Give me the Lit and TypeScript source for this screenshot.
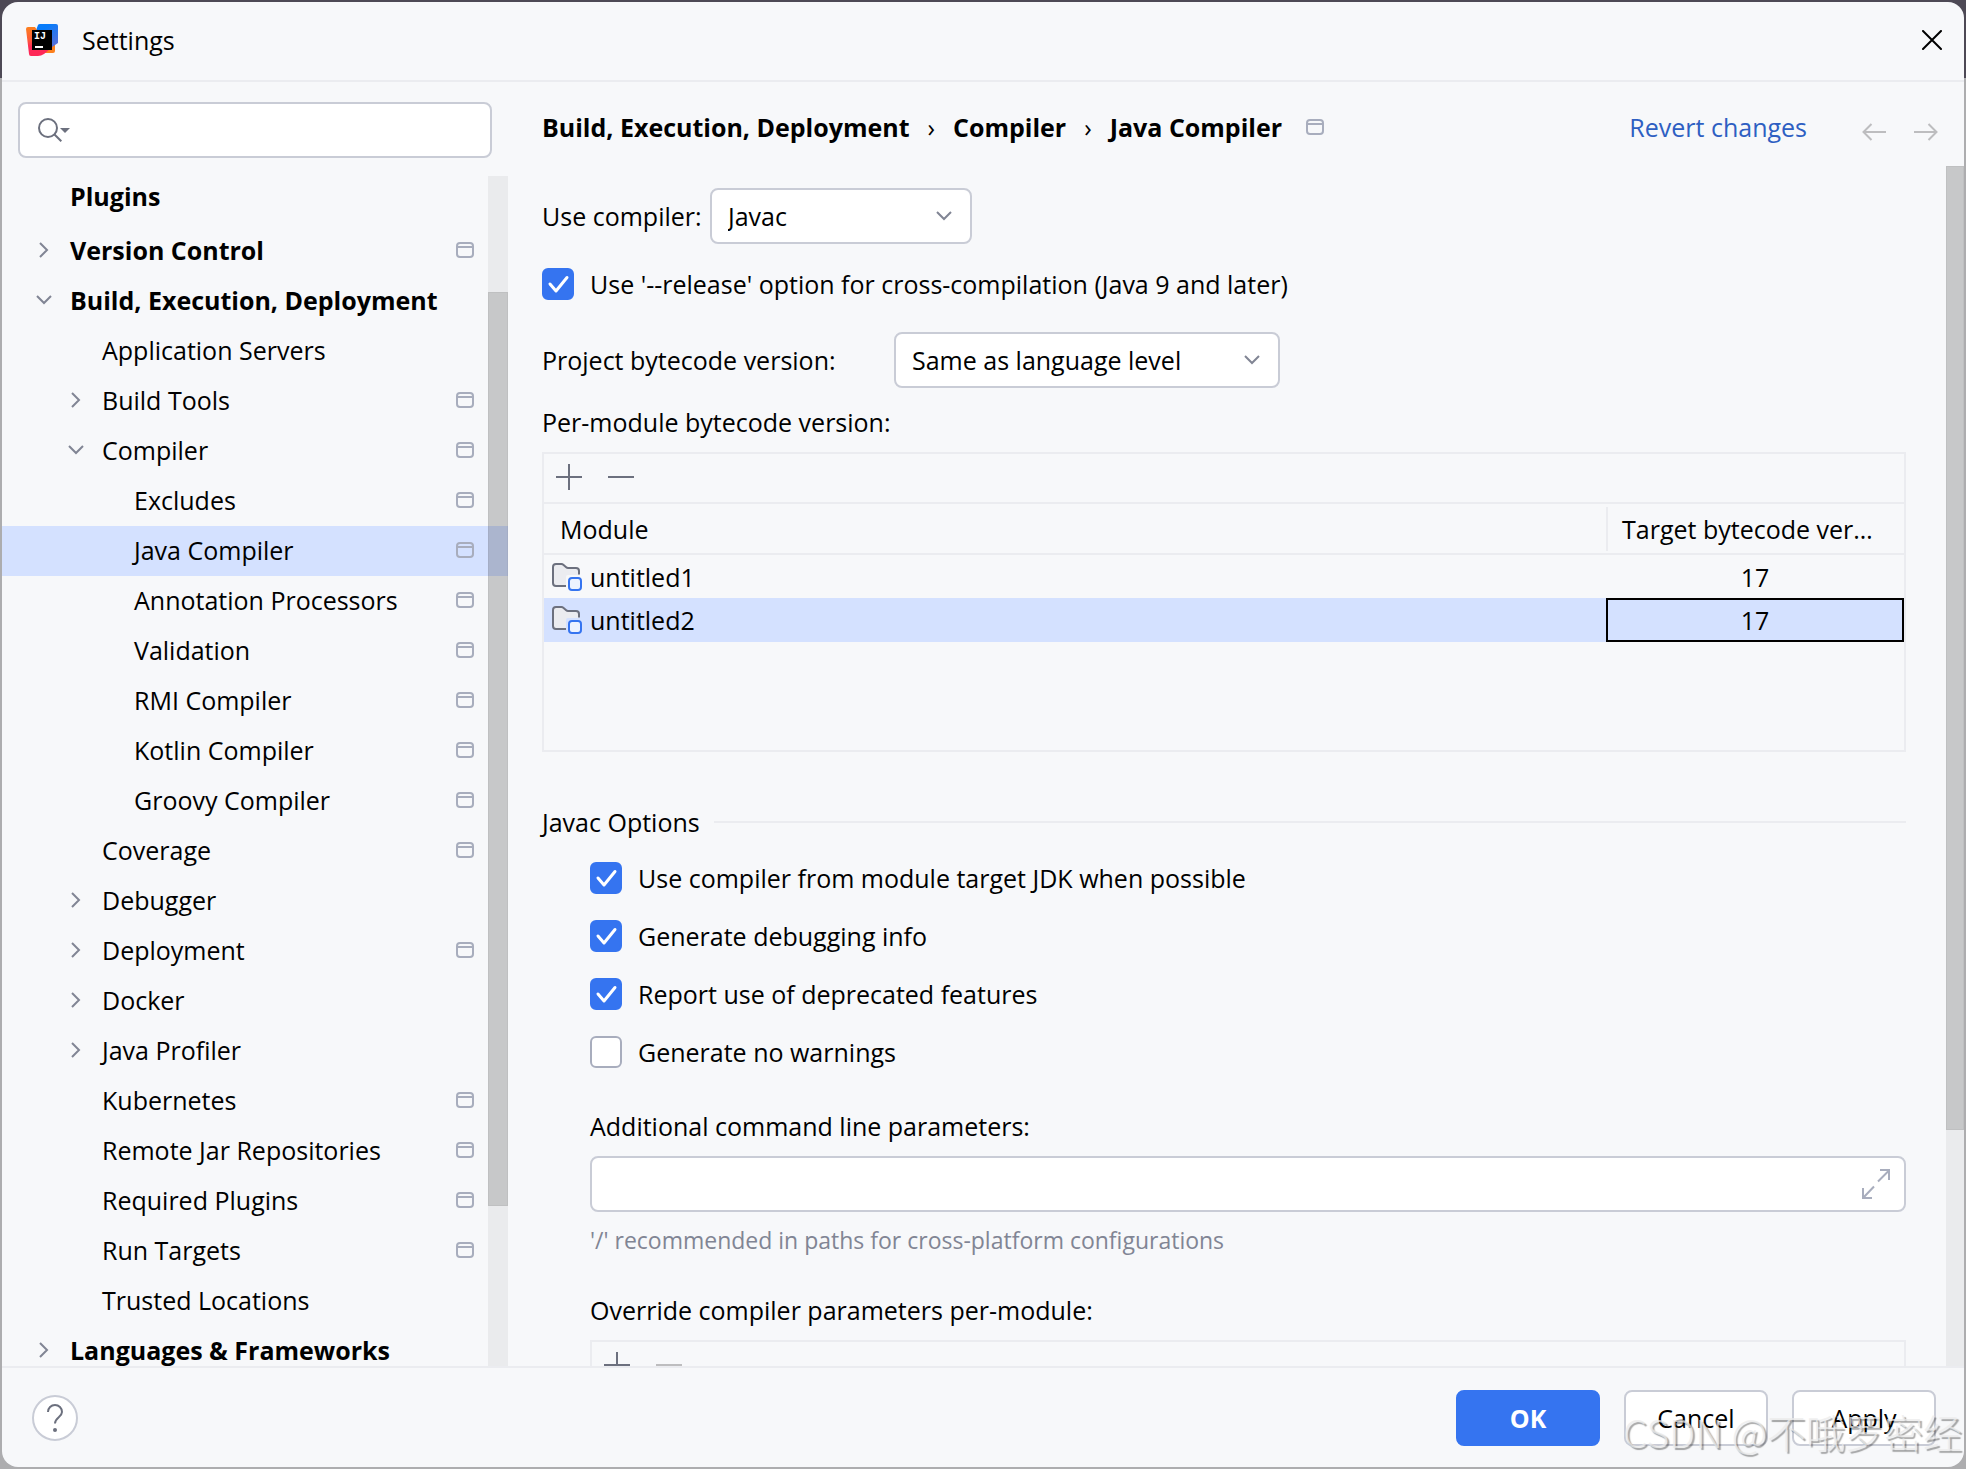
import { LitElement, html, css, svg, nothing } from "lit";
import { customElement, state } from "lit/decorators.js";
import { classMap } from "lit/directives/class-map.js";

interface TreeNode {
  label: string;
  depth: 0 | 1 | 2;
  arrow?: "open" | "closed";
  project?: boolean;
}

const TREE: TreeNode[] = [
  { label: "Plugins", depth: 0 },
  { label: "Version Control", depth: 0, arrow: "closed", project: true },
  { label: "Build, Execution, Deployment", depth: 0, arrow: "open" },
  { label: "Application Servers", depth: 1 },
  { label: "Build Tools", depth: 1, arrow: "closed", project: true },
  { label: "Compiler", depth: 1, arrow: "open", project: true },
  { label: "Excludes", depth: 2, project: true },
  { label: "Java Compiler", depth: 2, project: true },
  { label: "Annotation Processors", depth: 2, project: true },
  { label: "Validation", depth: 2, project: true },
  { label: "RMI Compiler", depth: 2, project: true },
  { label: "Kotlin Compiler", depth: 2, project: true },
  { label: "Groovy Compiler", depth: 2, project: true },
  { label: "Coverage", depth: 1, project: true },
  { label: "Debugger", depth: 1, arrow: "closed" },
  { label: "Deployment", depth: 1, arrow: "closed", project: true },
  { label: "Docker", depth: 1, arrow: "closed" },
  { label: "Java Profiler", depth: 1, arrow: "closed" },
  { label: "Kubernetes", depth: 1, project: true },
  { label: "Remote Jar Repositories", depth: 1, project: true },
  { label: "Required Plugins", depth: 1, project: true },
  { label: "Run Targets", depth: 1, project: true },
  { label: "Trusted Locations", depth: 1 },
  { label: "Languages & Frameworks", depth: 0, arrow: "closed" },
];

const MODULES = [
  { name: "untitled1", target: "17" },
  { name: "untitled2", target: "17" },
];

const JAVAC_OPTIONS = [
  { id: "module-jdk", label: "Use compiler from module target JDK when possible", checked: true },
  { id: "debug-info", label: "Generate debugging info", checked: true },
  { id: "deprecated", label: "Report use of deprecated features", checked: true },
  { id: "no-warnings", label: "Generate no warnings", checked: false },
];

const icon = (width: number, height: number, body: unknown) => html`<svg
  class="icon" width=${width} height=${height} viewBox="0 0 ${width} ${height}"
  fill="none" aria-hidden="true">${body}</svg>`;

const projectIcon = () => icon(18, 16, svg`
  <rect x="1" y="1" width="16" height="14" rx="3" stroke="#A8ADBD" stroke-width="2"/>
  <path d="M1 5H17" stroke="#A8ADBD" stroke-width="2"/>`);
const chevronRight = () => icon(16, 16, svg`
  <path d="M4 1L11 8L4 15" stroke="#818594" stroke-width="2"/>`);
const chevronDown = () => icon(16, 16, svg`
  <path d="M1 4L8 11L15 4" stroke="#818594" stroke-width="2"/>`);
const plusIcon = () => icon(26, 26, svg`
  <path d="M0 13H26M13 0V26" stroke="#6C707E" stroke-width="2"/>`);
const minusIcon = (color: string) => icon(26, 26, svg`
  <path d="M0 13H26" stroke=${color} stroke-width="2"/>`);
const moduleIcon = () => icon(30, 28, svg`
  <path d="M14 23H4A3 3 0 0 1 1 20V4A3 3 0 0 1 4 1H10L15 5H24A3 3 0 0 1 27 8V12H16A2 2 0 0 0 14 14Z" fill="#EBECF0"/>
  <path d="M14 23H4A3 3 0 0 1 1 20V4A3 3 0 0 1 4 1H9.500Q10.500 1 11.300 1.700L14.200 4.300Q15 5 16 5H24A3 3 0 0 1 27 8V11.500" stroke="#6C707E" stroke-width="2"/>
  <rect x="17" y="15" width="12" height="12" rx="3" fill="#EDF3FF" stroke="#3574F0" stroke-width="2"/>`);
const searchIcon = () => icon(32, 24, svg`
  <circle cx="10" cy="10" r="9" stroke="#6C707E" stroke-width="2"/>
  <path d="M16.500 16.500L23.300 23.300" stroke="#6C707E" stroke-width="2"/>
  <path d="M22 10H32L27 15Z" fill="#6C707E"/>`);
const closeIcon = () => icon(20, 20, svg`
  <path d="M1 1L19 19M19 1L1 19" stroke="#000" stroke-width="2" stroke-linecap="round"/>`);
const arrowLeft = () => icon(24, 18, svg`
  <path d="M24 9H1.500M9.500 1L1.500 9L9.500 17" stroke="#BDBDBF" stroke-width="2"/>`);
const arrowRight = () => icon(24, 18, svg`
  <path d="M0 9H22.500M14.500 1L22.500 9L14.500 17" stroke="#BDBDBF" stroke-width="2"/>`);
const expandIcon = () => icon(28, 30, svg`
  <path d="M16 12.500L27 1.500M18 1H27V11M12 17.500L1 29M1 19V29H10" stroke="#A8ADBD" stroke-width="2"/>`);
const helpIcon = () => icon(16, 28, svg`
  <path d="M1 8A7 7 0 0 1 15 8C15 13 8 13.500 8 19.500" stroke="#6C707E" stroke-width="2"/>
  <circle cx="8" cy="26" r="2" fill="#6C707E"/>`);
const checkIcon = () => icon(32, 32, svg`
  <path d="M8 16L14 23L25 9.500" stroke="#FFF" stroke-width="3" stroke-linecap="round" stroke-linejoin="round"/>`);

const logo = () => icon(32, 32, svg`
  <defs>
    <linearGradient id="warm" x1="0" y1="0" x2="0" y2="1">
      <stop offset="0" stop-color="#FC801D"/><stop offset="0.450" stop-color="#FE5A3A"/>
      <stop offset="0.700" stop-color="#FE2857"/>
    </linearGradient>
    <linearGradient id="cool" x1="0" y1="0" x2="0.600" y2="1">
      <stop offset="0.300" stop-color="#087CFA"/><stop offset="1" stop-color="#5A6FD8"/>
    </linearGradient>
  </defs>
  <path d="M20 20H29V27Q29 29 27 29H16Z" fill="#FC801D"/>
  <path d="M12 1Q12.500 0 14 0H30Q32 0 32 2V19L20 27L9 9Z" fill="url(#cool)"/>
  <path d="M0 5Q0 3 2 3H9L11 6L24 25L18 30Q15 32 12 32H5Q3 32 3 30Z" fill="url(#warm)"/>
  <rect x="6" y="6" width="20" height="20" fill="#000"/>
  <text x="8" y="15" class="logo-text">IJ</text>
  <rect x="9" y="22" width="8" height="2" fill="#FFF"/>`);

@customElement("app-root")
export class AppRoot extends LitElement {
  static styles = css`
    :host {
      display: block;
      height: 100vh;
      box-sizing: border-box;
      padding: 2px;
      overflow: hidden;
      position: relative;
      background: linear-gradient(#4d4955 78px, #adadaf 78px);
      color: #000;
      font: 25px/32px "Open Sans", "Noto Sans", sans-serif;
    }
    * { box-sizing: border-box; }
    button, select, input { font: inherit; color: inherit; margin: 0; }
    button { background: none; border: 0; padding: 0; }
    .icon { display: block; flex: none; }
    .logo-text { font: bold 10px "Liberation Mono", monospace; fill: #fff; }

    .window {
      height: 100%;
      display: flex;
      flex-direction: column;
      background: #f7f8fa;
      border-radius: 16px;
      overflow: hidden;
    }
    .titlebar {
      flex: none;
      height: 80px;
      display: flex;
      align-items: center;
      gap: 24px;
      padding: 0 22px 2px 24px;
      border-bottom: 2px solid #ebecf0;
    }
    .title { flex: 1; margin: 0; font-size: inherit; font-weight: 400; }

    .main { flex: 1; min-height: 0; display: flex; }
    .sidebar { flex: none; width: 506px; display: flex; flex-direction: column; }
    .search {
      display: flex;
      align-items: center;
      gap: 8px;
      height: 56px;
      margin: 20px 16px 18px;
      padding: 0 18px;
      background: #fff;
      border: 2px solid #c9ccd6;
      border-radius: 8px;
    }
    .search input { flex: 1; min-width: 0; border: 0; outline: 0; background: none; }

    .scroll { flex: 1; min-height: 0; position: relative; overflow: hidden; }
    .track { position: absolute; inset: 0 0 0 auto; background: rgba(0, 0, 0, 0.05); }
    .thumb {
      position: absolute;
      inset-inline: 0;
      background: rgba(0, 0, 0, 0.15);
      border: 1px solid rgba(0, 0, 0, 0.04);
    }
    .tree .track { width: 20px; }
    .page .track { width: 18px; }

    .tree ul { list-style: none; margin: 0; padding: 0; }
    .node {
      display: flex;
      align-items: center;
      gap: 18px;
      width: 100%;
      height: 50px;
      padding-right: 34px;
      padding-bottom: 2px;
      text-align: left;
    }
    .node.first { padding-bottom: 10px; }
    .node.selected { background: #d4e1ff; }
    .node .name { flex: 1; white-space: nowrap; }
    .twisty { flex: none; width: 16px; }
    .depth-0 { padding-left: 34px; font-weight: 700; }
    .depth-1 { padding-left: 66px; }
    .depth-2 { padding-left: 98px; }

    .content { flex: 1; min-width: 0; display: flex; flex-direction: column; }
    .header {
      flex: none;
      height: 84px;
      display: flex;
      align-items: center;
      gap: 27px;
      padding: 6px 26px 0 34px;
    }
    .crumbs {
      flex: 1;
      display: flex;
      gap: 18px;
      margin: 0;
      padding: 0;
      list-style: none;
      font-weight: 700;
      white-space: nowrap;
      align-items: center;
    }
    .crumbs li { display: flex; gap: 18px; align-items: center; }
    .crumbs span { font-weight: 400; }
    .crumbs .icon { margin-left: 6px; }
    .revert { color: #2e5fc2; text-decoration: none; white-space: nowrap; }
    .history { display: flex; gap: 28px; padding: 10px 0 0 28px; }

    .form { display: flex; flex-direction: column; padding: 22px 58px 0 34px; }
    .row { display: flex; align-items: center; }
    .compiler label { width: 168px; }
    .release { margin: 24px 0 32px; }
    .bytecode label { width: 352px; }
    .select { display: grid; align-items: center; }
    .select > * { grid-area: 1 / 1; }
    .select .icon { justify-self: end; margin-right: 20px; pointer-events: none; }
    select {
      appearance: none;
      height: 56px;
      padding: 0 56px 0 16px;
      border: 2px solid #c9ccd6;
      border-radius: 8px;
      background: #fff;
    }
    .narrow select { width: 262px; }
    .wide select { width: 386px; }

    .check { display: flex; align-items: center; gap: 16px; }
    .box { display: grid; flex: none; }
    .box > * { grid-area: 1 / 1; }
    .box .icon { pointer-events: none; visibility: hidden; }
    .box input {
      appearance: none;
      width: 32px;
      height: 32px;
      border: 2px solid #a8adbd;
      border-radius: 6px;
      background: #fff;
    }
    .box input:checked { background: #3574f0; border-color: #3574f0; }
    .box input:checked + .icon { visibility: visible; }

    .caption { display: block; margin: 18px 0 14px; }
    .panel { height: 300px; border: 2px solid #ebecf0; }
    .tools {
      display: flex;
      align-items: center;
      gap: 26px;
      height: 50px;
      padding: 0 12px 2px;
      border-bottom: 2px solid #ebecf0;
    }
    table { width: 100%; border-collapse: collapse; table-layout: fixed; }
    th, td { padding: 0; font-weight: 400; text-align: left; }
    th { height: 50px; border-bottom: 2px solid #ebecf0; }
    .col-target { width: 298px; }
    .head { display: block; padding: 6px 16px; }
    .head.target {
      padding: 6px 24px 6px 14px;
      border-left: 2px solid #ebecf0;
      overflow: hidden;
      text-overflow: ellipsis;
      white-space: nowrap;
    }
    td { height: 44px; }
    .module { display: flex; align-items: center; gap: 8px; padding-left: 8px; }
    .value { text-align: center; }
    tr.selected { background: #d4e1ff; }
    tr.selected .value { outline: 2px solid #000; outline-offset: -2px; }

    fieldset { border: 0; margin: 54px 0 0; padding: 0; min-width: 0; }
    legend { display: flex; align-items: center; gap: 14px; width: 100%; padding: 0; }
    .rule { flex: 1; height: 2px; background: #ebecf0; }
    .options { display: flex; flex-direction: column; gap: 26px; padding: 24px 0 0 48px; }
    .params { padding: 24px 0 0 48px; }
    .field {
      display: flex;
      align-items: center;
      height: 56px;
      padding: 0 14px;
      background: #fff;
      border: 2px solid #c9ccd6;
      border-radius: 8px;
    }
    .field input { flex: 1; min-width: 0; border: 0; outline: 0; background: none; }
    .hint { margin: 12px 0 38px; color: #818594; font-size: 23px; }

    .footer {
      flex: none;
      height: 101px;
      display: flex;
      align-items: center;
      gap: 24px;
      padding: 0 28px 0 30px;
      border-top: 2px solid #ebecf0;
    }
    .help {
      display: grid;
      place-items: center;
      width: 46px;
      height: 46px;
      margin-right: auto;
      background: #fff;
      border: 2px solid #c9ccd6;
      border-radius: 50%;
    }
    .action {
      width: 144px;
      height: 56px;
      background: #fff;
      border: 2px solid #c9ccd6;
      border-radius: 8px;
    }
    .action.primary { background: #3574f0; border-color: #3574f0; color: #fff; font-weight: 700; }
    .watermark {
      position: absolute;
      right: 4px;
      bottom: 10px;
      font: 300 39px/56px "Noto Sans CJK SC", sans-serif;
      color: rgba(235, 235, 235, 0.75);
      text-shadow: 2px 2px 1px rgba(0, 0, 0, 0.35);
      white-space: nowrap;
      pointer-events: none;
    }
  `;

  @state() private selectedPage = "Java Compiler";
  @state() private selectedModule = "untitled2";

  private scrollbar(start: number, size: number) {
    return html`<div class="track">
      <div class="thumb" style="top:${start}%;height:${size}%"></div>
    </div>`;
  }

  private node(item: TreeNode, index: number) {
    const classes = {
      node: true,
      first: index === 0,
      selected: item.label === this.selectedPage,
      [`depth-${item.depth}`]: true,
    };
    const arrow = item.arrow === "open" ? chevronDown() : item.arrow === "closed" ? chevronRight() : nothing;
    return html`<li>
      <button class=${classMap(classes)} @click=${() => (this.selectedPage = item.label)}>
        <span class="twisty">${arrow}</span>
        <span class="name">${item.label}</span>
        ${item.project ? projectIcon() : nothing}
      </button>
    </li>`;
  }

  private checkbox(id: string, label: string, checked: boolean) {
    return html`<div class="check">
      <span class="box"><input type="checkbox" id=${id} ?checked=${checked} />${checkIcon()}</span>
      <label for=${id}>${label}</label>
    </div>`;
  }

  private modules() {
    return html`<table>
      <colgroup><col /><col class="col-target" /></colgroup>
      <thead>
        <tr>
          <th><span class="head">Module</span></th>
          <th><span class="head target">Target bytecode version</span></th>
        </tr>
      </thead>
      <tbody>
        ${MODULES.map((m) => html`<tr
          class=${classMap({ selected: m.name === this.selectedModule })}
          @click=${() => (this.selectedModule = m.name)}>
          <td><span class="module">${moduleIcon()}${m.name}</span></td>
          <td class="value">${m.target}</td>
        </tr>`)}
      </tbody>
    </table>`;
  }

  render() {
    return html`
      <div class="window">
        <header class="titlebar">
          ${logo()}
          <h1 class="title">Settings</h1>
          <button aria-label="Close">${closeIcon()}</button>
        </header>
        <div class="main">
          <nav class="sidebar" aria-label="Settings pages">
            <div class="search">${searchIcon()}<input type="text" aria-label="Search settings" /></div>
            <div class="scroll tree">
              <ul>${TREE.map((item, i) => this.node(item, i))}</ul>
              ${this.scrollbar(9.75, 76.8)}
            </div>
          </nav>
          <main class="content">
            <div class="header">
              <ol class="crumbs">
                <li>Build, Execution, Deployment <span>›</span></li>
                <li>Compiler <span>›</span></li>
                <li>Java Compiler ${projectIcon()}</li>
              </ol>
              <a class="revert" href="#">Revert changes</a>
              <div class="history">
                <button aria-label="Back" disabled>${arrowLeft()}</button>
                <button aria-label="Forward" disabled>${arrowRight()}</button>
              </div>
            </div>
            <div class="scroll page">
              <div class="form">
                <div class="row compiler">
                  <label for="compiler">Use compiler:</label>
                  <span class="select narrow">
                    <select id="compiler"><option>Javac</option><option>Eclipse</option></select>
                    ${chevronDown()}
                  </span>
                </div>
                <div class="release">
                  ${this.checkbox("release", "Use '--release' option for cross-compilation (Java 9 and later)", true)}
                </div>
                <div class="row bytecode">
                  <label for="bytecode">Project bytecode version:</label>
                  <span class="select wide">
                    <select id="bytecode"><option>Same as language level</option><option>17</option></select>
                    ${chevronDown()}
                  </span>
                </div>
                <span class="caption">Per-module bytecode version:</span>
                <div class="panel">
                  <div class="tools">
                    <button aria-label="Add module">${plusIcon()}</button>
                    <button aria-label="Remove module">${minusIcon("#6C707E")}</button>
                  </div>
                  ${this.modules()}
                </div>
                <fieldset>
                  <legend>Javac Options<span class="rule"></span></legend>
                  <div class="options">
                    ${JAVAC_OPTIONS.map((o) => this.checkbox(o.id, o.label, o.checked))}
                  </div>
                  <div class="params">
                    <label class="caption" for="params">Additional command line parameters:</label>
                    <div class="field">
                      <input id="params" type="text" />
                      <button aria-label="Expand">${expandIcon()}</button>
                    </div>
                    <p class="hint">'/' recommended in paths for cross-platform configurations</p>
                    <span class="caption">Override compiler parameters per-module:</span>
                    <div class="panel">
                      <div class="tools">
                        <button aria-label="Add override">${plusIcon()}</button>
                        <button aria-label="Remove override" disabled>${minusIcon("#BDBDBF")}</button>
                      </div>
                    </div>
                  </div>
                </fieldset>
              </div>
              ${this.scrollbar(0, 80.3)}
            </div>
          </main>
        </div>
        <footer class="footer">
          <button class="help" aria-label="Help">${helpIcon()}</button>
          <button class="action primary">OK</button>
          <button class="action">Cancel</button>
          <button class="action">Apply</button>
        </footer>
      </div>
      <div class="watermark">CSDN @不哦罗密经</div>
    `;
  }
}
